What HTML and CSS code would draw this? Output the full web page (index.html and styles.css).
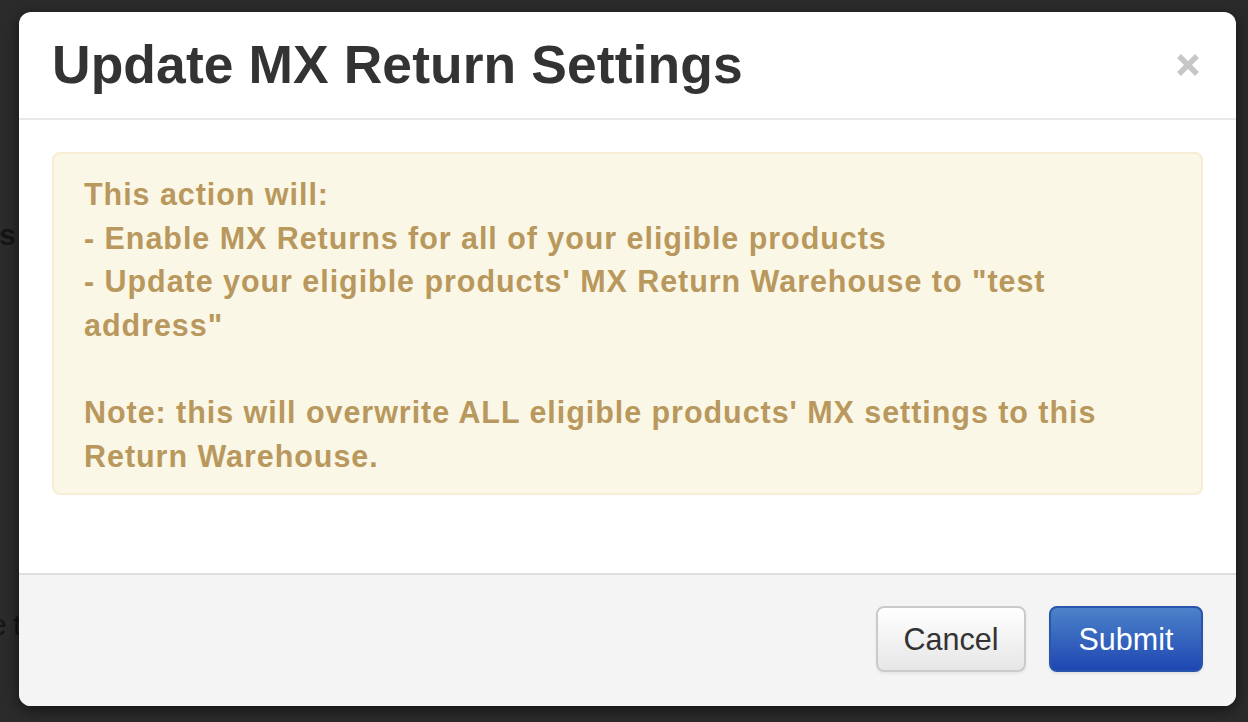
FILE: index.html
```html
<!DOCTYPE html>
<html lang="en">
<head>
<meta charset="utf-8">
<title>Update MX Return Settings</title>
<link rel="stylesheet" href="styles.css">
</head>
<body>
<div class="backdrop" aria-hidden="true">
  <span class="bg-frag bg-frag-1">s</span>
  <span class="bg-frag bg-frag-2">e t</span>
</div>
<div class="modal" role="dialog" aria-labelledby="modal-title">
  <div class="modal-header">
    <h3 id="modal-title" class="modal-title">Update MX Return Settings</h3>
    <button class="close" type="button" aria-label="Close">
      <svg width="24" height="24" viewBox="0 0 24 24" aria-hidden="true"><path d="M3 3 L21 21 M21 3 L3 21" stroke="#c6c6c6" stroke-width="5.5" fill="none"/></svg>
    </button>
  </div>
  <div class="modal-body">
    <div class="alert">
      This action will:<br>
      - Enable MX Returns for all of your eligible products<br>
      - Update your eligible products' MX Return Warehouse to "test address"<br>
      <br>
      Note: this will overwrite ALL eligible products' MX settings to this Return Warehouse.
    </div>
  </div>
  <div class="modal-footer">
    <button class="btn btn-default" type="button">Cancel</button>
    <button class="btn btn-primary" type="button">Submit</button>
  </div>
</div>
</body>
</html>
```

FILE: styles.css
```css
* { box-sizing: border-box; }

html, body {
  margin: 0;
  height: 722px;
}

body {
  background: #2b2b2b;
  padding: 12px 12px 16px 19px;
  font-family: "Liberation Sans", Arial, Helvetica, sans-serif;
  overflow: hidden;
  position: relative;
}

.backdrop {
  position: absolute;
  inset: 0;
}

.bg-frag {
  position: absolute;
  color: #151515;
  font-size: 30px;
  white-space: nowrap;
}

.bg-frag-1 {
  font-weight: bold;
  left: -1px;
  top: 218px;
}

.bg-frag-2 {
  left: -10px;
  top: 608px;
  letter-spacing: -1px;
}

.modal {
  position: relative;
  z-index: 1;
  width: 1217px;
  height: 694px;
  background: #fff;
  border-radius: 12px;
  box-shadow: 0 4px 14px rgba(0, 0, 0, 0.55);
  display: flex;
  flex-direction: column;
  overflow: hidden;
}

.modal-header {
  display: flex;
  align-items: center;
  justify-content: space-between;
  padding: 20px 36px 21px 33px;
  border-bottom: 2px solid #e8e8e8;
}

.modal-title {
  margin: 0;
  font-size: 53.4px;
  line-height: 65px;
  font-weight: bold;
  color: #333;
  letter-spacing: 0.1px;
}

.close {
  border: 0;
  background: none;
  padding: 0;
  width: 24px;
  height: 24px;
  display: flex;
  cursor: pointer;
}

.modal-body {
  flex: 1;
  padding: 32px 33px;
}

.alert {
  background: #fbf7e6;
  border: 2px solid #f7ecd4;
  border-radius: 8px;
  padding: 19px 76px 15px 30px;
  color: #b9985e;
  font-size: 30.5px;
  line-height: 43.6px;
  font-weight: bold;
  letter-spacing: 0.95px;
}

.modal-footer {
  display: flex;
  justify-content: flex-end;
  gap: 23px;
  padding: 31px 33px 34px;
  background: #f4f4f4;
  border-top: 2px solid #dedede;
}

.btn {
  height: 66px;
  font-family: "Liberation Sans", Arial, Helvetica, sans-serif;
  font-size: 30.5px;
  border-radius: 8px;
  cursor: pointer;
}

.btn-default {
  width: 150px;
  color: #333;
  background: linear-gradient(#ffffff, #e6e6e6);
  border: 2px solid #cacaca;
  box-shadow: inset 0 2px 0 rgba(255, 255, 255, 0.3), 0 2px 3px rgba(0, 0, 0, 0.06);
}

.btn-primary {
  width: 154px;
  color: #fff;
  background: linear-gradient(#4c82c9, #1f47b2);
  border: 2px solid #2a55ad;
  box-shadow: 0 2px 3px rgba(0, 0, 0, 0.08);
}
```
